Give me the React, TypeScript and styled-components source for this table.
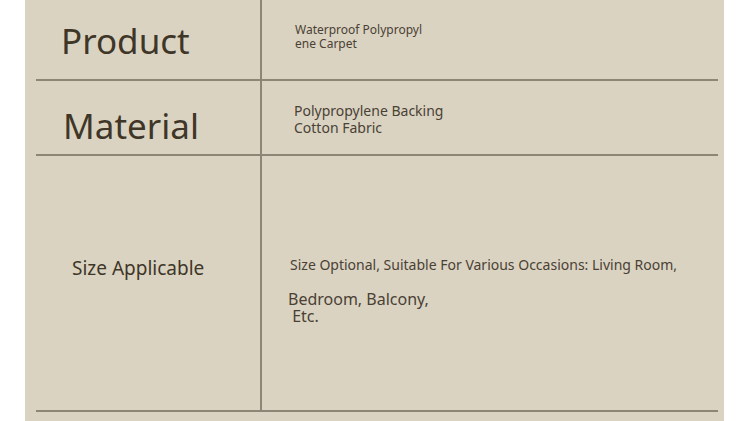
import React from "react";
import styled, { createGlobalStyle } from "styled-components";

const Global = createGlobalStyle`
  html, body { margin: 0; padding: 0; background: #ffffff; }
  body { font-family: "Noto Sans", "Open Sans", sans-serif; }
`;

const Page = styled.div`
  width: 750px;
  height: 421px;
  overflow: hidden;
  background: #ffffff;
`;

const Panel = styled.div`
  margin-left: 25px;
  width: 699px;
  height: 421px;
  box-sizing: border-box;
  padding: 0 6px 0 11px;
  background: #dad3c2;
`;

const Table = styled.div`
  display: grid;
  grid-template-columns: 226px 1fr;
  grid-template-rows: 81px 75px 256px;
  width: 682px;
`;

const Cell = styled.div<{ $left?: boolean; $pad: string }>`
  box-sizing: border-box;
  border-bottom: 2px solid #8d8676;
  ${(p) => (p.$left ? "border-right: 2px solid #8d8676;" : "")}
  padding: ${(p) => p.$pad};
  color: #3f3628;
`;

const Label = styled.div<{ $size: number }>`
  font-size: ${(p) => p.$size}px;
  line-height: 1.2;
  white-space: nowrap;
`;

const Value = styled.div<{ $size: number; $lh: number; $gap?: number; $shift?: number }>`
  font-size: ${(p) => p.$size}px;
  line-height: ${(p) => p.$lh}px;
  margin-top: ${(p) => p.$gap ?? 0}px;
  margin-left: ${(p) => p.$shift ?? 0}px;
  color: #4a4134;
  white-space: pre;
`;

export default function App() {
  return (
    <Page>
      <Global />
      <Panel>
        <Table>
          <Cell $left $pad="20px 0 0 25px">
            <Label $size={35}>Product</Label>
          </Cell>
          <Cell $pad="23px 0 0 33px">
            <Value $size={12} $lh={14}>{"Waterproof Polypropyl\nene Carpet"}</Value>
          </Cell>
          <Cell $left $pad="24px 0 0 27px">
            <Label $size={35}>Material</Label>
          </Cell>
          <Cell $pad="21px 0 0 32px">
            <Value $size={14} $lh={17}>{"Polypropylene Backing\nCotton Fabric"}</Value>
          </Cell>
          <Cell $left $pad="101px 0 0 36px">
            <Label $size={19}>Size Applicable</Label>
          </Cell>
          <Cell $pad="99px 0 0 28px">
            <Value $size={14} $lh={20}>
              {"Size Optional, Suitable For Various Occasions: Living Room,"}
            </Value>
            <Value $size={16} $lh={17} $gap={16} $shift={-2}>
              {"Bedroom, Balcony,\n Etc."}
            </Value>
          </Cell>
        </Table>
      </Panel>
    </Page>
  );
}
